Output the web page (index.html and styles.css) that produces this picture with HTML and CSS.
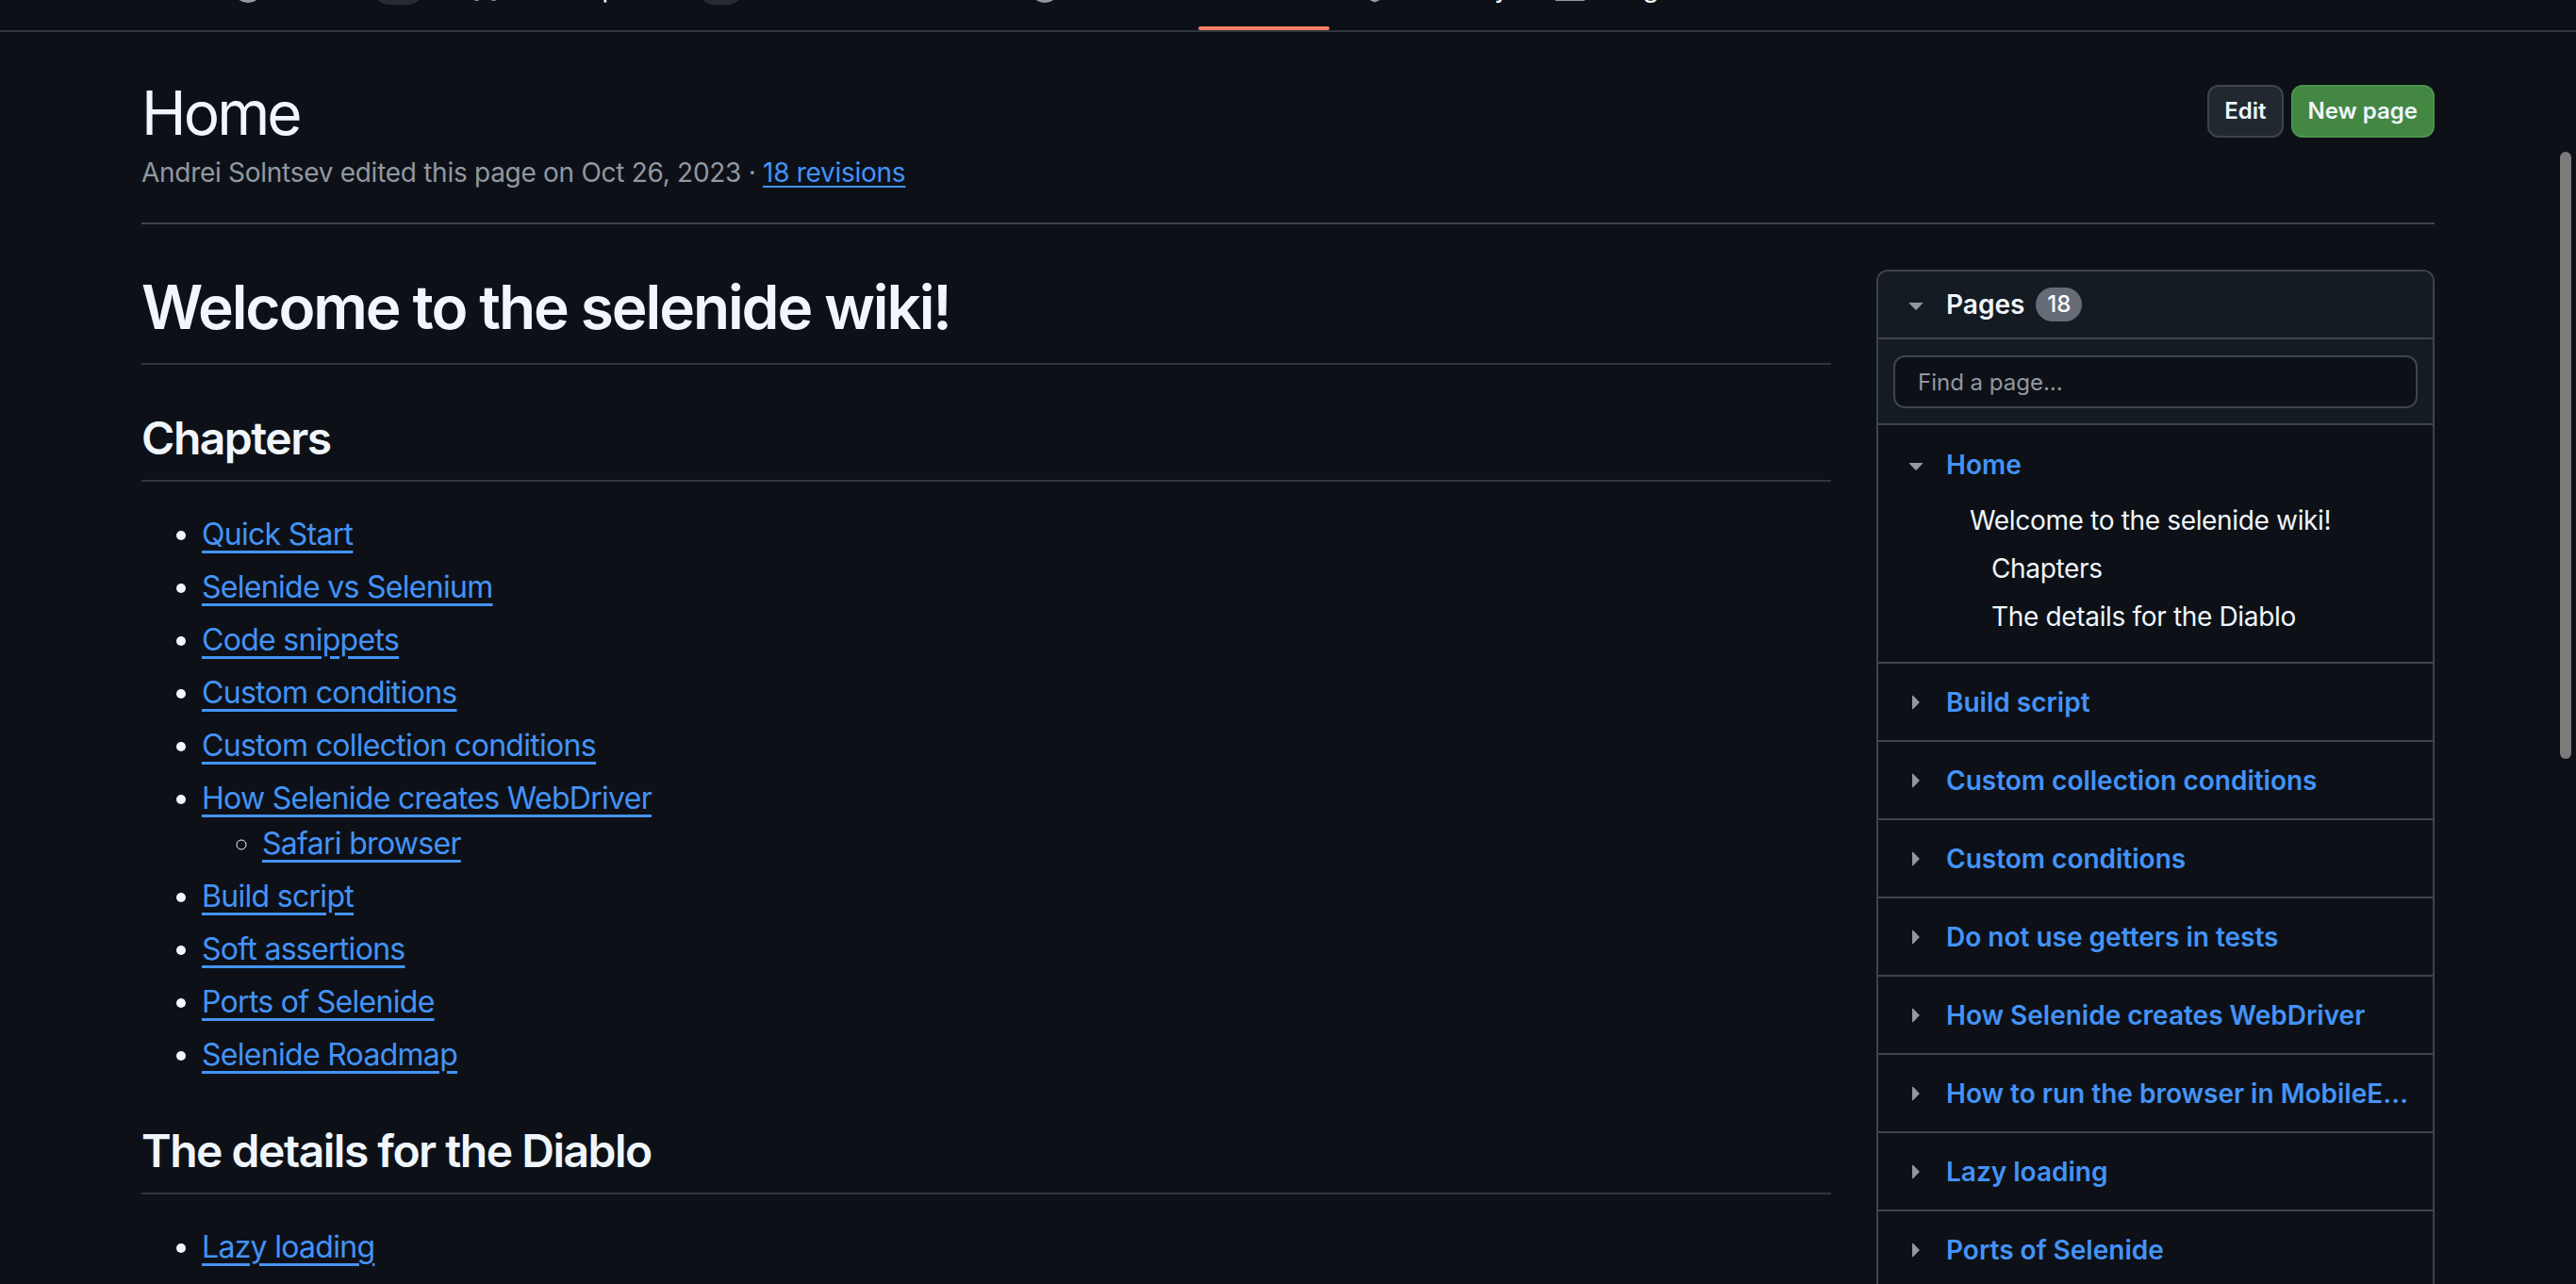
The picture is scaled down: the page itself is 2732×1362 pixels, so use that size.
FILE: index.html
```html
<!DOCTYPE html>
<html lang="en">
<head>
<meta charset="utf-8">
<title>Home · selenide/selenide Wiki</title>
<link rel="stylesheet" href="styles.css">
</head>
<body>
<nav class="repo-nav">
  <a class="tab" href="#"><svg viewBox="0 0 16 16"><path d="M4.72 3.22a.75.75 0 0 1 1.06 1.06L2.06 8l3.72 3.720a.75.75 0 1 1-1.06 1.06L.47 8.53a.75.75 0 0 1 0-1.06Zm6.56 0a.75.75 0 1 0-1.06 1.06L13.94 8l-3.72 3.72a.75.75 0 1 0 1.06 1.060l4.25-4.25a.75.75 0 0 0 0-1.06Z"/></svg><span>Code</span></a>
  <a class="tab" href="#"><svg viewBox="0 0 16 16"><path d="M8 9.5a1.5 1.5 0 1 0 0-3 1.5 1.5 0 0 0 0 3Z"/><path d="M8 0a8 8 0 1 1 0 16A8 8 0 0 1 8 0ZM1.5 8a6.5 6.5 0 1 0 13 0 6.5 6.5 0 0 0-13 0Z"/></svg><span>Issues</span><span class="counter">24</span></a>
  <a class="tab" href="#"><svg viewBox="0 0 16 16"><path d="M1.5 3.25a2.25 2.25 0 1 1 3 2.122v5.256a2.251 2.251 0 1 1-1.5 0V5.372A2.25 2.25 0 0 1 1.5 3.25Zm5.677-.177L9.573.677A.25.25 0 0 1 10 .854V2.5h1A2.5 2.5 0 0 1 13.5 5v5.628a2.251 2.251 0 1 1-1.5 0V5a1 1 0 0 0-1-1h-1v1.646a.25.25 0 0 1-.427.177L7.177 3.427a.25.25 0 0 1 0-.354ZM3.75 2.5a.75.75 0 1 0 0 1.5.75.75 0 0 0 0-1.5Zm0 9.5a.75.75 0 1 0 0 1.5.75.75 0 0 0 0-1.5Zm8.25.75a.75.75 0 1 0 1.5 0 .75.75 0 0 0-1.5 0Z"/></svg><span>Pull requests</span><span class="counter counter-spaced">12</span></a>
  <a class="tab" href="#"><svg viewBox="0 0 16 16"><path d="M1.75 1h8.5c.966 0 1.75.784 1.75 1.75v5.5A1.75 1.75 0 0 1 10.25 10H7.061l-2.574 2.573A1.458 1.458 0 0 1 2 11.543V10h-.25A1.75 1.75 0 0 1 0 8.25v-5.5C0 1.784.784 1 1.75 1ZM1.5 2.75v5.5c0 .138.112.25.25.25h1a.75.75 0 0 1 .75.75v2.19l2.720-2.72a.749.749 0 0 1 .53-.22h3.5a.25.25 0 0 0 .25-.25v-5.5a.25.25 0 0 0-.25-.25h-8.5a.25.25 0 0 0-.25.25Z"/></svg><span>Discussions</span></a>
  <a class="tab" href="#"><svg viewBox="0 0 16 16"><path d="M8 0a8 8 0 1 1 0 16A8 8 0 0 1 8 0ZM1.5 8a6.5 6.5 0 1 0 13 0 6.5 6.5 0 0 0-13 0Zm4.879-2.773 4.264 2.559a.25.25 0 0 1 0 .428l-4.264 2.559A.25.25 0 0 1 6 10.559V5.442a.25.25 0 0 1 .379-.215Z"/></svg><span>Actions</span></a>
  <a class="tab selected" href="#"><svg viewBox="0 0 16 16"><path d="M0 1.75A.75.75 0 0 1 .75 1h4.253c1.227 0 2.317.59 3 1.501A3.743 3.743 0 0 1 11.006 1h4.245a.75.75 0 0 1 .75.75v10.5a.75.75 0 0 1-.75.75h-4.507a2.25 2.25 0 0 0-1.591.659l-.622.621a.75.75 0 0 1-1.06 0l-.622-.621A2.25 2.25 0 0 0 5.258 13H.75a.75.75 0 0 1-.75-.75Zm7.251 10.324.004-5.073-.002-2.253A2.25 2.25 0 0 0 5.003 2.5H1.5v9h3.757a3.75 3.75 0 0 1 1.994.574ZM8.755 4.75l-.004 7.322a3.752 3.752 0 0 1 1.992-.572H14.5v-9h-3.495a2.25 2.25 0 0 0-2.25 2.25Z"/></svg><span>Wiki</span></a>
  <a class="tab" href="#"><svg viewBox="0 0 16 16"><path d="M7.467.133a1.748 1.748 0 0 1 1.066 0l5.25 1.68A1.75 1.75 0 0 1 15 3.48V7c0 1.566-.32 3.182-1.303 4.682-.983 1.498-2.585 2.813-5.032 3.855a1.697 1.697 0 0 1-1.33 0c-2.447-1.042-4.049-2.357-5.032-3.855C1.32 10.182 1 8.566 1 7V3.48a1.755 1.755 0 0 1 1.217-1.667Zm.61 1.429a.25.25 0 0 0-.153 0l-5.25 1.68a.25.25 0 0 0-.174.238V7c0 1.358.275 2.666 1.057 3.86.784 1.194 2.121 2.34 4.366 3.297a.196.196 0 0 0 .154 0c2.245-.956 3.582-2.104 4.366-3.298C13.225 9.666 13.5 8.360 13.5 7V3.48a.251.251 0 0 0-.174-.237l-5.25-1.68Z"/></svg><span>Security</span></a>
  <a class="tab" href="#"><svg viewBox="0 0 16 16"><path d="M1.5 1.75V13.5h13.75a.75.75 0 0 1 0 1.5H.75a.75.75 0 0 1-.75-.75V1.75a.75.75 0 0 1 1.5 0Zm14.28 2.53-5.25 5.25a.75.75 0 0 1-1.06 0L7 7.06 4.28 9.78a.751.751 0 0 1-1.042-.018.751.751 0 0 1-.018-1.042l3.25-3.25a.75.75 0 0 1 1.06 0L10 7.94l4.72-4.72a.751.751 0 0 1 1.042.018.751.751 0 0 1 .018 1.042Z"/></svg><span>Insights</span></a>
</nav>

<div class="page">
  <header class="wiki-header">
    <div class="title-block">
      <h1 class="wiki-title">Home</h1>
      <div class="wiki-meta">Andrei Solntsev edited this page on Oct 26, 2023 · <a href="#">18 revisions</a></div>
    </div>
    <div class="header-actions">
      <a class="btn" href="#">Edit</a>
      <a class="btn btn-primary" href="#">New page</a>
    </div>
  </header>

  <div class="layout">
    <main class="markdown-body">
      <h1>Welcome to the selenide wiki!</h1>
      <h2>Chapters</h2>
      <ul>
        <li><a href="#">Quick Start</a></li>
        <li><a href="#">Selenide vs Selenium</a></li>
        <li><a href="#">Code snippets</a></li>
        <li><a href="#">Custom conditions</a></li>
        <li><a href="#">Custom collection conditions</a></li>
        <li><a href="#">How Selenide creates WebDriver</a>
          <ul>
            <li><a href="#">Safari browser</a></li>
          </ul>
        </li>
        <li><a href="#">Build script</a></li>
        <li><a href="#">Soft assertions</a></li>
        <li><a href="#">Ports of Selenide</a></li>
        <li><a href="#">Selenide Roadmap</a></li>
      </ul>
      <h2>The details for the Diablo</h2>
      <ul>
        <li><a href="#">Lazy loading</a></li>
        <li><a href="#">Do not use getters in tests</a></li>
      </ul>
    </main>

    <aside class="sidebar">
      <div class="sidebar-box">
        <div class="box-header">
          <svg class="caret" viewBox="0 0 16 16"><path d="M4.427 7.427l3.396 3.396a.25.25 0 0 0 .354 0l3.396-3.396A.25.25 0 0 0 11.396 7H4.604a.25.25 0 0 0-.177.427Z"/></svg>
          <span class="box-title">Pages</span>
          <span class="pages-count">18</span>
        </div>
        <div class="search">
          <input class="search-input" type="text" placeholder="Find a page...">
        </div>
        <div class="page-item home">
          <div class="page-row">
            <svg class="caret" viewBox="0 0 16 16"><path d="M4.427 7.427l3.396 3.396a.25.25 0 0 0 .354 0l3.396-3.396A.25.25 0 0 0 11.396 7H4.604a.25.25 0 0 0-.177.427Z"/></svg>
            <a class="page-link" href="#">Home</a>
          </div>
          <ul class="toc">
            <li>Welcome to the selenide wiki!
              <ul class="toc-sub">
                <li>Chapters</li>
                <li>The details for the Diablo</li>
              </ul>
            </li>
          </ul>
        </div>
        <div class="page-item"><div class="page-row"><svg class="caret" viewBox="0 0 16 16"><path d="M6.427 4.427l3.396 3.396a.25.25 0 0 1 0 .354l-3.396 3.396A.25.25 0 0 1 6 11.396V4.604a.25.25 0 0 1 .427-.177Z"/></svg><a class="page-link" href="#">Build script</a></div></div>
        <div class="page-item"><div class="page-row"><svg class="caret" viewBox="0 0 16 16"><path d="M6.427 4.427l3.396 3.396a.25.25 0 0 1 0 .354l-3.396 3.396A.25.25 0 0 1 6 11.396V4.604a.25.25 0 0 1 .427-.177Z"/></svg><a class="page-link" href="#">Custom collection conditions</a></div></div>
        <div class="page-item"><div class="page-row"><svg class="caret" viewBox="0 0 16 16"><path d="M6.427 4.427l3.396 3.396a.25.25 0 0 1 0 .354l-3.396 3.396A.25.25 0 0 1 6 11.396V4.604a.25.25 0 0 1 .427-.177Z"/></svg><a class="page-link" href="#">Custom conditions</a></div></div>
        <div class="page-item"><div class="page-row"><svg class="caret" viewBox="0 0 16 16"><path d="M6.427 4.427l3.396 3.396a.25.25 0 0 1 0 .354l-3.396 3.396A.25.25 0 0 1 6 11.396V4.604a.25.25 0 0 1 .427-.177Z"/></svg><a class="page-link" href="#">Do not use getters in tests</a></div></div>
        <div class="page-item"><div class="page-row"><svg class="caret" viewBox="0 0 16 16"><path d="M6.427 4.427l3.396 3.396a.25.25 0 0 1 0 .354l-3.396 3.396A.25.25 0 0 1 6 11.396V4.604a.25.25 0 0 1 .427-.177Z"/></svg><a class="page-link" href="#">How Selenide creates WebDriver</a></div></div>
        <div class="page-item"><div class="page-row"><svg class="caret" viewBox="0 0 16 16"><path d="M6.427 4.427l3.396 3.396a.25.25 0 0 1 0 .354l-3.396 3.396A.25.25 0 0 1 6 11.396V4.604a.25.25 0 0 1 .427-.177Z"/></svg><a class="page-link" href="#">How to run the browser in MobileEmulation mode</a></div></div>
        <div class="page-item"><div class="page-row"><svg class="caret" viewBox="0 0 16 16"><path d="M6.427 4.427l3.396 3.396a.25.25 0 0 1 0 .354l-3.396 3.396A.25.25 0 0 1 6 11.396V4.604a.25.25 0 0 1 .427-.177Z"/></svg><a class="page-link" href="#">Lazy loading</a></div></div>
        <div class="page-item"><div class="page-row"><svg class="caret" viewBox="0 0 16 16"><path d="M6.427 4.427l3.396 3.396a.25.25 0 0 1 0 .354l-3.396 3.396A.25.25 0 0 1 6 11.396V4.604a.25.25 0 0 1 .427-.177Z"/></svg><a class="page-link" href="#">Ports of Selenide</a></div></div>
        <div class="page-item"><div class="page-row"><svg class="caret" viewBox="0 0 16 16"><path d="M6.427 4.427l3.396 3.396a.25.25 0 0 1 0 .354l-3.396 3.396A.25.25 0 0 1 6 11.396V4.604a.25.25 0 0 1 .427-.177Z"/></svg><a class="page-link" href="#">Quick Start</a></div></div>
      </div>
    </aside>
  </div>
</div>

<div class="scroll-thumb"></div>
</body>
</html>
```

FILE: styles.css
```css
* { box-sizing: border-box; }

html, body {
  margin: 0;
  background: #0d1117;
}

body {
  font-family: Inter, "Noto Sans", "Liberation Sans", sans-serif;
  color: #f0f6fc;
  overflow: hidden;
}

a { color: #4493f8; }

/* ---------- repository tabs (scrolled mostly out of view) ---------- */
.repo-nav {
  display: flex;
  gap: 16px;
  margin-top: -62px;
  height: 96px;
  padding: 4px 64px 0;
  border-bottom: 2px solid #30363d;
}

.tab {
  position: relative;
  display: flex;
  align-items: center;
  gap: 16px;
  padding: 0 16px;
  font-size: 28px;
  line-height: 42px;
  color: #f0f6fc;
  text-decoration: none;
  white-space: nowrap;
}

.tab svg {
  width: 32px;
  height: 32px;
  fill: #9198a1;
  flex: none;
}

.tab .counter {
  display: inline-block;
  min-width: 40px;
  height: 36px;
  padding: 0 12px;
  border-radius: 18px;
  background: #262c36;
  font-size: 24px;
  line-height: 36px;
  font-weight: 500;
  text-align: center;
}

.tab .counter-spaced { margin-left: 8px; }

.tab.selected { font-weight: 600; }

.tab.selected::after {
  content: "";
  position: absolute;
  left: 0;
  right: 0;
  bottom: 0;
  height: 4px;
  border-radius: 4px;
  background: #f78166;
}

/* ---------- page ---------- */
.page {
  padding: 0 150px;
}

.wiki-header {
  display: flex;
  justify-content: space-between;
  align-items: flex-start;
  padding: 46px 0 32px;
  border-bottom: 2px solid #3d444d;
}

.wiki-title {
  margin: 0;
  font-size: 64px;
  line-height: 80px;
  font-weight: 400;
  letter-spacing: -0.045em;
  color: #f0f6fc;
}

.wiki-meta {
  margin-top: 2px;
  font-size: 28px;
  line-height: 42px;
  letter-spacing: -0.01em;
  color: #9198a1;
}

.wiki-meta a {
  text-decoration: underline;
  text-decoration-thickness: 2px;
  text-underline-offset: 4px;
}

.header-actions {
  display: flex;
  gap: 8px;
  margin-top: 10px;
}

.btn {
  display: inline-block;
  height: 56px;
  padding: 0 16px;
  border: 2px solid #3d444d;
  border-radius: 12px;
  background: #212830;
  color: #f0f6fc;
  font-size: 24px;
  line-height: 52px;
  font-weight: 600;
  text-decoration: none;
}

.btn-primary {
  background: #438743;
  border-color: #4d944d;
}

.layout {
  display: flex;
  gap: 48px;
  padding-top: 48px;
  align-items: flex-start;
}

/* ---------- markdown ---------- */
.markdown-body {
  flex: 1;
  min-width: 0;
  font-size: 32px;
  line-height: 1.5;
  letter-spacing: -0.022em;
  color: #f0f6fc;
}

.markdown-body h1 {
  margin: 0 0 32px;
  font-size: 64px;
  line-height: 1.25;
  font-weight: 600;
  letter-spacing: -0.033em;
  padding-bottom: 19px;
  border-bottom: 2px solid #30363d;
}

.markdown-body h2 {
  margin: 48px 0 32px;
  font-size: 48px;
  line-height: 1.25;
  font-weight: 600;
  letter-spacing: -0.031em;
  padding-bottom: 14px;
  border-bottom: 2px solid #30363d;
}

.markdown-body ul {
  margin: 0 0 32px;
  padding-left: 64px;
}

.markdown-body ul ul {
  margin: 0;
  list-style-type: circle;
}

.markdown-body li + li { margin-top: 8px; }

.markdown-body a {
  text-decoration: underline;
  text-decoration-thickness: 3px;
  text-underline-offset: 6px;
}

/* ---------- sidebar ---------- */
.sidebar {
  width: 592px;
  flex: none;
}

.sidebar-box {
  border: 2px solid #3d444d;
  border-radius: 12px;
  overflow: hidden;
}

.caret {
  width: 32px;
  height: 32px;
  fill: #9198a1;
  flex: none;
}

.box-header {
  display: flex;
  align-items: center;
  gap: 16px;
  padding: 14px 24px;
  background: #151b23;
  border-bottom: 2px solid #3d444d;
  font-size: 28px;
  line-height: 42px;
  font-weight: 600;
}

.pages-count {
  margin-left: -4px;
  height: 36px;
  padding: 0 12px;
  border-radius: 18px;
  background: #656c76;
  color: #ffffff;
  font-size: 24px;
  line-height: 36px;
  font-weight: 500;
}

.search {
  padding: 17px 16px 16px;
  background: #151b23;
  border-bottom: 2px solid #3d444d;
}

.search-input {
  display: block;
  width: 100%;
  height: 56px;
  padding: 0 24px;
  border: 2px solid #3d444d;
  border-radius: 12px;
  background: #0d1117;
  color: #f0f6fc;
  font-family: inherit;
  font-size: 24px;
  outline: none;
}

.search-input::placeholder { color: #9198a1; }

.page-item {
  padding: 20px 22px 19px 24px;
  border-bottom: 2px solid #3d444d;
  font-size: 28px;
  line-height: 42px;
}

.page-item.home {
  padding-top: 21px;
  padding-bottom: 27px;
}

.page-row {
  display: flex;
  align-items: center;
  gap: 16px;
  min-width: 0;
}

.page-link {
  min-width: 0;
  font-weight: 600;
  text-decoration: none;
  white-space: nowrap;
  overflow: hidden;
  text-overflow: ellipsis;
}

.toc {
  list-style: none;
  margin: 17px 0 0;
  padding-left: 73px;
  letter-spacing: -0.012em;
  color: #f0f6fc;
}

.toc-sub {
  list-style: none;
  margin: 9px 0 0;
  padding-left: 23px;
}

.toc-sub li + li { margin-top: 9px; }

/* overlay scrollbar */
.scroll-thumb {
  position: fixed;
  top: 161px;
  right: 5px;
  width: 12px;
  height: 644px;
  border-radius: 6px;
  background: #7b7b7b;
}
```
